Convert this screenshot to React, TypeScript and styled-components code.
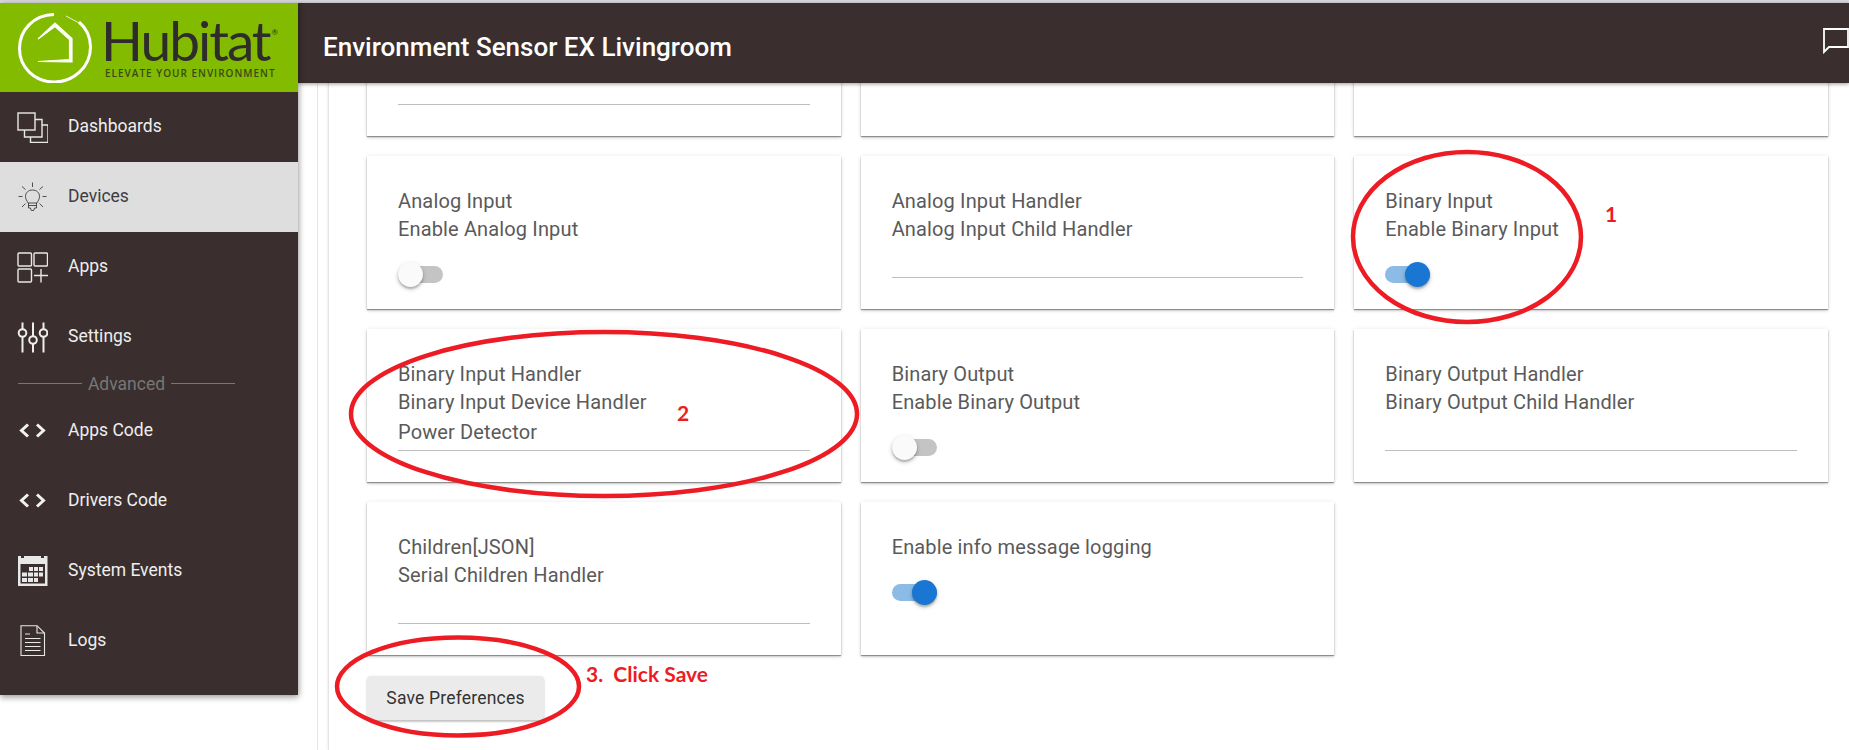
import React from "react";
import styled, { createGlobalStyle } from "styled-components";

const GlobalStyle = createGlobalStyle`
  html, body {
    margin: 0;
    padding: 0;
    background: #fff;
    overflow: hidden;
  }
  * {
    box-sizing: border-box;
  }
`;

const BROWN = "#3a2f2e";

const Page = styled.div`
  position: relative;
  width: 1849px;
  height: 750px;
  overflow: hidden;
  display: flex;
  flex-direction: column;
  font-family: Roboto, "Liberation Sans", sans-serif;
`;

const TopStrip = styled.div`
  height: 3px;
  flex: none;
  background: #d9d9dd;
`;

const Shell = styled.div`
  flex: 1;
  min-height: 0;
  display: flex;
  align-items: flex-start;
`;

const Sidebar = styled.aside`
  width: 298px;
  flex: none;
  background: ${BROWN};
  padding-bottom: 20px;
  box-shadow: 0 3px 6px rgba(0, 0, 0, 0.3), 2px 0 5px rgba(0, 0, 0, 0.15);
  position: relative;
  z-index: 3;
`;

const LogoBar = styled.div`
  height: 89px;
  background: #82bb00;
  padding: 10px 0 0 18px;
  display: flex;
  gap: 13px;
  color: #2f2d2b;
`;

const Wordmark = styled.div`
  display: flex;
  flex-direction: column;
`;

const WordmarkName = styled.div`
  font-family: Lato, sans-serif;
  font-size: 55px;
  line-height: 54px;
  letter-spacing: -2px;
  font-weight: 400;
  margin-left: -4px;
  display: flex;
  align-items: flex-start;

  sup {
    font-size: 8px;
    line-height: 8px;
    letter-spacing: 0;
    margin: 15px 0 0 2px;
  }
`;

const Tagline = styled.div`
  font-family: "Open Sans", sans-serif;
  font-size: 10px;
  line-height: 12px;
  font-weight: 600;
  letter-spacing: 1px;
  white-space: nowrap;
  color: #3c4a18;
`;

const NavItem = styled.div<{ $active?: boolean; $raised?: boolean }>`
  height: 70px;
  display: flex;
  align-items: center;
  padding-left: 17px;
  gap: 20px;
  background: ${(p) => (p.$active ? "#dedede" : "transparent")};
  color: ${(p) => (p.$active ? "#3d3d3d" : "#eeeeee")};
  font-size: 17.5px;
  font-weight: 400;

  svg {
    width: 31px;
    height: 31px;
    flex: none;
  }

  span {
    margin-top: ${(p) => (p.$raised ? "-2px" : "0")};
  }
`;

const SectionLabel = styled.div`
  height: 23px;
  display: flex;
  align-items: center;
  padding: 0 63px 0 18px;
  gap: 6px;
  color: #777;
  font-size: 17.5px;

  &::before,
  &::after {
    content: "";
    flex: 1;
    height: 1px;
    background: #777;
  }
`;

const Main = styled.main`
  flex: 1;
  min-width: 0;
  height: 100%;
  display: flex;
  flex-direction: column;
`;

const Header = styled.header`
  height: 80px;
  flex: none;
  background: ${BROWN};
  display: flex;
  align-items: center;
  justify-content: space-between;
  padding-left: 25px;
  color: #fff;
  box-shadow: 0 1px 4px rgba(0, 0, 0, 0.4);
  position: relative;
  z-index: 2;

  svg {
    width: 26px;
    height: 26px;
    flex: none;
    margin-top: -4px;
  }
`;

const Title = styled.h1`
  margin: 7px 0 0;
  font-size: 26px;
  font-weight: 500;
`;

const Body = styled.div`
  flex: 1;
  min-height: 0;
  display: flex;
  overflow: hidden;
`;

const Rail = styled.div`
  width: 11px;
  margin-left: 19px;
  flex: none;
  border-left: 1px solid #e6e6e6;
`;

const Panel = styled.div`
  flex: 1;
  min-width: 0;
  padding: 0 21px 0 38px;
  border-left: 1px solid #e4e4e4;
  box-shadow: -1px 0 2px rgba(0, 0, 0, 0.06);
`;

const CardGrid = styled.div`
  margin-top: -100px;
  display: grid;
  grid-template-columns: repeat(3, 1fr);
  grid-auto-rows: 153px;
  gap: 20px;
`;

const Card = styled.section`
  background: #fff;
  padding: 31px;
  display: flex;
  flex-direction: column;
  box-shadow: 0 1px 1px rgba(0, 0, 0, 0.35), 0 2px 3px rgba(0, 0, 0, 0.15), 0 0 5px rgba(0, 0, 0, 0.07);
  color: #5a5a5a;
  font-size: 20px;
  font-weight: 400;
  letter-spacing: 0.14px;
`;

const Label = styled.div`
  line-height: 28px;
  white-space: nowrap;
`;

const TextInput = styled.div`
  flex: 1;
  display: flex;
  align-items: flex-end;
  border-bottom: 1px solid #bdbdbd;
  line-height: 28px;
  padding-bottom: 4px;
`;

const Switch = styled.div<{ $on?: boolean }>`
  position: relative;
  width: 45px;
  height: 25px;
  margin-top: 18.5px;

  &::before {
    content: "";
    position: absolute;
    left: 0;
    right: 0;
    top: 4px;
    height: 17px;
    border-radius: 9px;
    background: ${(p) => (p.$on ? "#8cbce6" : "#c4c4c4")};
  }

  &::after {
    content: "";
    position: absolute;
    top: 0;
    left: ${(p) => (p.$on ? "20px" : "0")};
    width: 25px;
    height: 25px;
    border-radius: 50%;
    background: ${(p) => (p.$on ? "#1976d2" : "#fafafa")};
    box-shadow: 0 2px 2px rgba(0, 0, 0, 0.2), 0 2px 5px rgba(0, 0, 0, 0.2);
  }
`;

const SaveButton = styled.button`
  display: block;
  margin-top: 21px;
  width: 177px;
  height: 44px;
  border: 0;
  border-radius: 4px;
  background: #ebebeb;
  color: #333;
  font-family: Roboto, sans-serif;
  font-size: 17.5px;
  font-weight: 400;
  letter-spacing: 0.2px;
  box-shadow: 0 2px 2px rgba(0, 0, 0, 0.22), 0 0 2px rgba(0, 0, 0, 0.08);
`;

const Marks = styled.svg`
  position: absolute;
  inset: 0;
  z-index: 5;
  pointer-events: none;
`;

const Note = styled.span<{ $x: number; $y: number }>`
  position: absolute;
  left: ${(p) => p.$x}px;
  top: ${(p) => p.$y}px;
  z-index: 5;
  font-family: Lato, sans-serif;
  font-size: 21px;
  line-height: 26px;
  font-weight: 700;
  color: #ed1c24;
  white-space: pre;
`;

const LogoMark = () => (
  <svg width="74" height="70" viewBox="0 0 74 70" fill="none" style={{ flex: "none" }}>
    <path d="M36 1.5C16 1.8 1.5 17 1.5 35.5C1.5 54.5 16.5 69 36.5 69C55 69 72.5 54.5 72.5 34C72.5 24 68 15 61 9" stroke="#fff" strokeWidth="3" />
    <path d="M48 3L63 11" stroke="#fff" strokeWidth="0.8" />
    <path d="M20 26L37 10L54 25.5V49L20 48.5L51.5 46.5V26.5L37 13.5Z" fill="#fff" stroke="#fff" strokeWidth="1.2" strokeLinejoin="miter" />
  </svg>
);

const strokeProps = { fill: "none", stroke: "#e8e8e8", strokeWidth: 1.4 };

const IconDashboards = () => (
  <svg viewBox="0 0 31 31" {...strokeProps}>
    <rect x="1" y="1" width="17" height="17" />
    <path d="M18 7.5H25V25H7.5V18" />
    <path d="M25 13H31V30.5H13.5V25" />
  </svg>
);

const IconDevices = () => (
  <svg viewBox="0 0 31 31" fill="none" stroke="#3d3d3d" strokeWidth="0.9">
    <path d="M11 21C10 18.5 8.5 17.5 8.5 14.5C8.5 10.5 11.5 8 15.5 8C19.5 8 22.5 10.5 22.5 14.5C22.5 17.5 21 18.5 20 21Z" />
    <path d="M11.5 21V26H13.5L14.3 28.5H16.7L17.5 26H19.5V21M11.5 23.5H19.5" />
    <path d="M15.5 0.5V5M5 4.5L8.5 7.5M26 4.5L22.5 7.5M1.5 14.5H5.5M25.5 14.5H29.5M5 25L8.5 21.5M26 25L22.5 21.5" />
  </svg>
);

const IconApps = () => (
  <svg viewBox="0 0 31 31" {...strokeProps}>
    <rect x="1" y="1" width="13.5" height="13" rx="1" />
    <rect x="17" y="1" width="13.5" height="13" rx="1" />
    <rect x="1" y="17" width="13.5" height="13" rx="1" />
    <path d="M17 23.5H31M24 17V30.5" />
  </svg>
);

const IconSettings = () => (
  <svg viewBox="0 0 31 31" fill="none" stroke="#eeeeee" strokeWidth="2">
    <path d="M5.5 0.5V7M5.5 15V30.5M16 0.5V14M16 22V30.5M26.5 0.5V7M26.5 15V30.5" />
    <circle cx="5.5" cy="11" r="3.8" />
    <circle cx="16" cy="18" r="3.8" />
    <circle cx="26.5" cy="11" r="3.8" />
  </svg>
);

const IconCode = () => (
  <svg viewBox="0 0 31 31" fill="none" stroke="#f2f2f2" strokeWidth="3">
    <path d="M11 9.5L4.5 15.5L11 21.5M20 9.5L26.5 15.5L20 21.5" />
  </svg>
);

const IconCalendar = () => (
  <svg viewBox="0 0 31 31">
    <path fill="#e8e8e8" d="M1 1H4V3H7V1H24V3H27V1H30.5V31H1Z" />
    <rect x="3.5" y="9" width="24.5" height="19.5" fill={BROWN} />
    <g fill="#e8e8e8">
      <rect x="12" y="12" width="4" height="4" />
      <rect x="17" y="12" width="4" height="4" />
      <rect x="22" y="12" width="4" height="4" />
      <rect x="5" y="17.5" width="5" height="4" />
      <rect x="11" y="17.5" width="5" height="4" />
      <rect x="17" y="17.5" width="4" height="4" />
      <rect x="22" y="17.5" width="4" height="4" />
      <rect x="5" y="23" width="5" height="4" />
      <rect x="11" y="23" width="5" height="4" />
      <rect x="17" y="23" width="4" height="4" />
    </g>
  </svg>
);

const IconLogs = () => (
  <svg viewBox="0 0 31 31" fill="none" stroke="#e8e8e8" strokeWidth="1.1">
    <path d="M4 0.7H20L27.5 8V30.5H4Z" />
    <path d="M20 0.7V8H27.5M8 9H13M8 13.5H23.5M8 17.5H23.5M8 21.5H23.5M8 25.5H23.5" />
  </svg>
);

const IconComment = () => (
  <svg viewBox="0 0 26 26" fill="none" stroke="#fff" strokeWidth="1.8">
    <path d="M1 1H25V19H6L1 24Z" />
  </svg>
);

const navTop = [
  { label: "Dashboards", icon: <IconDashboards /> },
  { label: "Devices", icon: <IconDevices />, active: true },
  { label: "Apps", icon: <IconApps /> },
  { label: "Settings", icon: <IconSettings /> },
];

const navBottom = [
  { label: "Apps Code", icon: <IconCode /> },
  { label: "Drivers Code", icon: <IconCode /> },
  { label: "System Events", icon: <IconCalendar /> },
  { label: "Logs", icon: <IconLogs /> },
];

type Pref = { labels?: string[]; input?: boolean; value?: string; toggle?: "on" | "off" };

const prefs: Pref[] = [
  { input: true },
  {},
  {},
  { labels: ["Analog Input", "Enable Analog Input"], toggle: "off" },
  { labels: ["Analog Input Handler", "Analog Input Child Handler"], input: true },
  { labels: ["Binary Input", "Enable Binary Input"], toggle: "on" },
  { labels: ["Binary Input Handler", "Binary Input Device Handler"], input: true, value: "Power Detector" },
  { labels: ["Binary Output", "Enable Binary Output"], toggle: "off" },
  { labels: ["Binary Output Handler", "Binary Output Child Handler"], input: true },
  { labels: ["Children[JSON]", "Serial Children Handler"], input: true },
  { labels: ["Enable info message logging"], toggle: "on" },
];

export default function App() {
  return (
    <Page>
      <GlobalStyle />
      <TopStrip />
      <Shell>
        <Sidebar>
          <LogoBar>
            <LogoMark />
            <Wordmark>
              <WordmarkName>
                Hubitat<sup>®</sup>
              </WordmarkName>
              <Tagline>ELEVATE YOUR ENVIRONMENT</Tagline>
            </Wordmark>
          </LogoBar>
          {navTop.map((n) => (
            <NavItem key={n.label} $active={n.active} $raised>
              {n.icon}
              <span>{n.label}</span>
            </NavItem>
          ))}
          <SectionLabel>Advanced</SectionLabel>
          {navBottom.map((n) => (
            <NavItem key={n.label}>
              {n.icon}
              <span>{n.label}</span>
            </NavItem>
          ))}
        </Sidebar>
        <Main>
          <Header>
            <Title>Environment Sensor EX Livingroom</Title>
            <IconComment />
          </Header>
          <Body>
            <Rail />
            <Panel>
              <CardGrid>
                {prefs.map((p, i) => (
                  <Card key={i}>
                    {p.labels?.map((l) => (
                      <Label key={l}>{l}</Label>
                    ))}
                    {p.input && <TextInput>{p.value}</TextInput>}
                    {p.toggle && <Switch $on={p.toggle === "on"} />}
                  </Card>
                ))}
              </CardGrid>
              <SaveButton type="button">Save Preferences</SaveButton>
            </Panel>
          </Body>
        </Main>
      </Shell>
      <Marks width="1849" height="750" viewBox="0 0 1849 750" fill="none" stroke="#ed1c24" strokeWidth="4.5">
        <ellipse cx="1467" cy="237" rx="114" ry="85" />
        <ellipse cx="604" cy="414" rx="253" ry="82" />
        <ellipse cx="458" cy="686.5" rx="121" ry="49" />
      </Marks>
      <Note $x={1605} $y={201}>1</Note>
      <Note $x={677} $y={400}>2</Note>
      <Note $x={586} $y={661}>{"3.  Click Save"}</Note>
    </Page>
  );
}
